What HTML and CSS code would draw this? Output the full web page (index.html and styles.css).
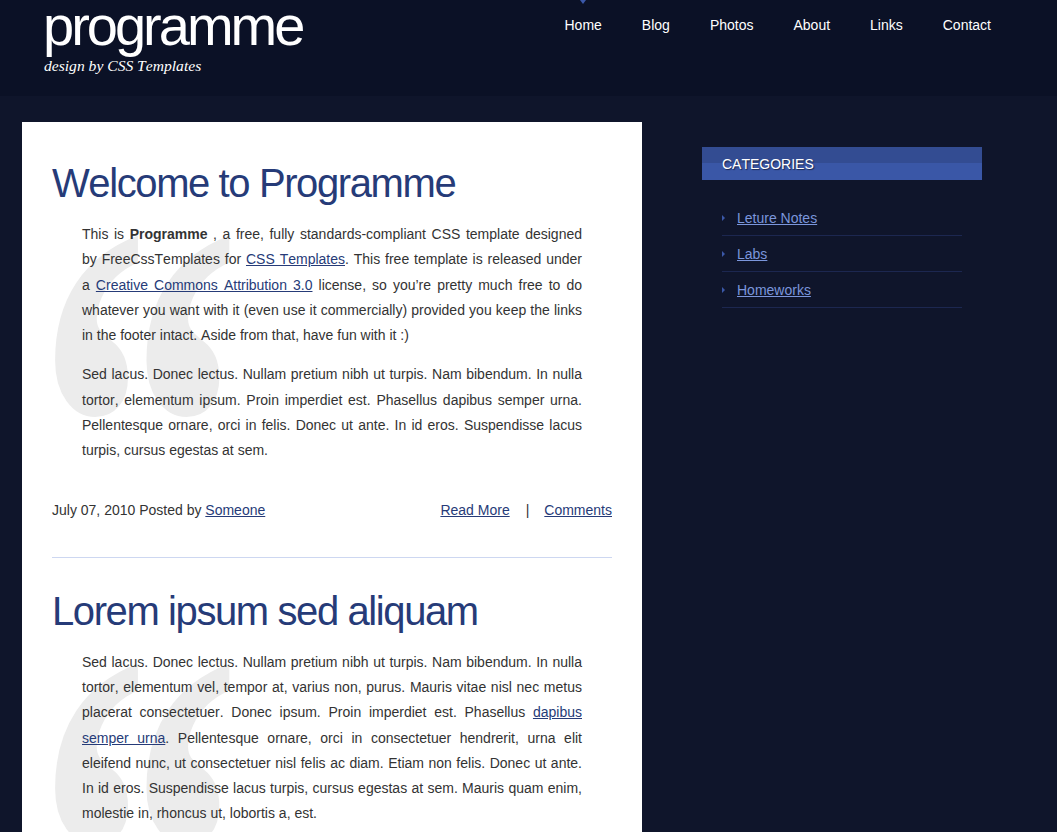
FILE: index.html
```html
<!DOCTYPE html>
<html lang="en">
<head>
<meta charset="utf-8">
<title>Programme</title>
<link rel="stylesheet" href="styles.css">
</head>
<body>
<div class="header">
  <div class="logo">
    <h1>programme</h1>
    <p class="tagline">design by CSS Templates</p>
  </div>
  <ul class="nav">
    <li class="current"><a href="#">Home</a></li>
    <li><a href="#">Blog</a></li>
    <li><a href="#">Photos</a></li>
    <li><a href="#">About</a></li>
    <li><a href="#">Links</a></li>
    <li><a href="#">Contact</a></li>
  </ul>
</div>
<div class="page">
  <div class="content">
    <div class="post first">
      <h2 class="title">Welcome to Programme</h2>
      <div class="entry">
        <p>This is <strong>Programme </strong>, a free, fully standards-compliant CSS template designed by FreeCssTemplates for <a href="#">CSS Templates</a>. This free template is released under a <a href="#">Creative Commons Attribution 3.0</a> license, so you’re pretty much free to do whatever you want with it (even use it commercially) provided you keep the links in the footer intact. Aside from that, have fun with it :)</p>
        <p>Sed lacus. Donec lectus. Nullam pretium nibh ut turpis. Nam bibendum. In nulla tortor, elementum ipsum. Proin imperdiet est. Phasellus dapibus semper urna. Pellentesque ornare, orci in felis. Donec ut ante. In id eros. Suspendisse lacus turpis, cursus egestas at sem.</p>
      </div>
      <div class="meta">
        <span>July 07, 2010 Posted by <a href="#">Someone</a></span>
        <span class="links"><a href="#">Read More</a><span class="sep">|</span><a href="#">Comments</a></span>
      </div>
    </div>
    <div class="post">
      <h2 class="title">Lorem ipsum sed aliquam</h2>
      <div class="entry">
        <p>Sed lacus. Donec lectus. Nullam pretium nibh ut turpis. Nam bibendum. In nulla tortor, elementum vel, tempor at, varius non, purus. Mauris vitae nisl nec metus placerat consectetuer. Donec ipsum. Proin imperdiet est. Phasellus <a href="#">dapibus semper urna</a>. Pellentesque ornare, orci in consectetuer hendrerit, urna elit eleifend nunc, ut consectetuer nisl felis ac diam. Etiam non felis. Donec ut ante. In id eros. Suspendisse lacus turpis, cursus egestas at sem. Mauris quam enim, molestie in, rhoncus ut, lobortis a, est.</p>
      </div>
    </div>
  </div>
  <div class="sidebar">
    <h3 class="box-title">Categories</h3>
    <ul class="cats">
      <li><a href="#">Leture Notes</a></li>
      <li><a href="#">Labs</a></li>
      <li><a href="#">Homeworks</a></li>
    </ul>
  </div>
</div>
</body>
</html>
```
FILE: styles.css
```css
html, body {
  margin: 0;
  padding: 0;
}
body {
  background: #0f152b;
  font-family: "Liberation Sans", Arial, sans-serif;
  font-size: 14px;
  color: #333333;
  font-kerning: none;
}
a {
  color: #263b78;
}

.header {
  height: 96px;
  background: #0b1126;
  display: flex;
  justify-content: space-between;
  align-items: flex-start;
  padding: 0 46px 0 43px;
}
.logo h1 {
  margin: 0;
  font-weight: normal;
  font-size: 56px;
  line-height: 52px;
  letter-spacing: -3px;
  color: #ffffff;
}
.tagline {
  margin: 5px 0 0 1px;
  font-family: "Liberation Serif", "Times New Roman", serif;
  font-style: italic;
  font-size: 15.6px;
  line-height: 18px;
  color: #ffffff;
}
.nav {
  list-style: none;
  margin: 0;
  padding: 0;
  display: flex;
}
.nav li {
  position: relative;
}
.nav a {
  display: block;
  padding: 16px 20px 0;
  line-height: 18px;
  color: #ffffff;
  text-decoration: none;
}
.nav li.current::before {
  content: "";
  position: absolute;
  top: 0;
  left: 50%;
  margin-left: -3px;
  border-left: 3px solid transparent;
  border-right: 3px solid transparent;
  border-top: 4px solid #3b58a8;
}

.page {
  display: flex;
  align-items: flex-start;
  padding: 26px 0 0 22px;
}
.content {
  width: 560px;
  background: #ffffff;
  padding: 0 30px 40px;
}
.post {
  position: relative;
  padding-top: 28px;
}
.post.first {
  padding-top: 36px;
  padding-bottom: 34px;
  border-bottom: 1px solid #cdd7f1;
}
.post::before {
  content: "\201C";
  position: absolute;
  left: -17px;
  top: 3px;
  font-family: "Liberation Serif", "Times New Roman", serif;
  font-weight: bold;
  font-size: 420px;
  line-height: 1;
  color: #ececec;
  transform: scale(0.99, 1.43);
  transform-origin: 0 0;
}
.post.first::before {
  top: 11px;
}
.title {
  position: relative;
  margin: 0 0 14px;
  font-weight: normal;
  font-size: 40px;
  line-height: 50px;
  letter-spacing: -1.4px;
  color: #263b78;
}
.entry {
  position: relative;
  padding: 0 30px;
}
.entry p {
  margin: 0 0 14px;
  line-height: 25.3px;
  text-align: justify;
}
.meta {
  position: relative;
  display: flex;
  justify-content: space-between;
  padding-top: 20px;
  line-height: 25px;
}
.meta .sep {
  padding: 0 15px 0 16px;
}

.sidebar {
  width: 280px;
  margin-left: 60px;
  padding-top: 25px;
}
.box-title {
  margin: 0;
  height: 33px;
  padding-left: 20px;
  line-height: 34px;
  font-size: 14px;
  font-weight: normal;
  text-transform: uppercase;
  color: #ffffff;
  text-shadow: 1px 1px 1px #1b2850;
  background: linear-gradient(to bottom, #334c92 0, #334c92 16px, #3a57a7 16px, #3a57a7 100%);
}
.cats {
  list-style: none;
  margin: 20px 20px 0;
  padding: 0;
}
.cats li {
  position: relative;
  height: 35px;
  line-height: 36px;
  padding-left: 15px;
  border-bottom: 1px solid #1c2750;
}
.cats li::before {
  content: "";
  position: absolute;
  left: 0;
  top: 15px;
  border-top: 3px solid transparent;
  border-bottom: 3px solid transparent;
  border-left: 3px solid #3b58a8;
}
.cats a {
  color: #7b96dc;
}
```
